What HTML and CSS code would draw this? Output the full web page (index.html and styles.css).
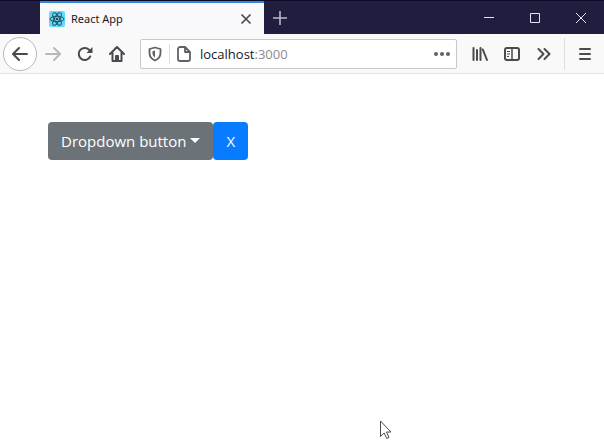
FILE: index.html
```html
<!DOCTYPE html>
<html lang="en">
<head>
<meta charset="utf-8">
<title>React App</title>
<link rel="stylesheet" href="styles.css">
</head>
<body>
<header class="titlebar">
  <div class="tab">
    <svg class="favicon" width="16" height="16" viewBox="0 0 16 16" fill="none" stroke="#24515f">
      <rect width="16" height="16" rx="2" fill="#61dafb" stroke="none"/>
      <ellipse cx="8" cy="8" rx="7" ry="2.7"/>
      <ellipse cx="8" cy="8" rx="7" ry="2.7" transform="rotate(60 8 8)"/>
      <ellipse cx="8" cy="8" rx="7" ry="2.7" transform="rotate(120 8 8)"/>
      <circle cx="8" cy="8" r="1.3" fill="#24515f" stroke="none"/>
    </svg>
    <span class="tab-title">React App</span>
    <button class="tab-close" aria-label="Close tab">
      <svg width="12" height="12" viewBox="0 0 12 12" fill="none" stroke="#4a4a4f" stroke-width="1.7"><path d="M1.5 1.5l9 9M10.5 1.5l-9 9"/></svg>
    </button>
  </div>
  <button class="new-tab" aria-label="New tab">
    <svg width="16" height="16" viewBox="0 0 16 16" fill="none" stroke="#b9b8cc" stroke-width="1.6"><path d="M8 1v14M1 8h14"/></svg>
  </button>
  <div class="window-controls">
    <button aria-label="Minimize"><svg width="12" height="12" viewBox="0 0 12 12" fill="none" stroke="#e4e3f2"><path d="M1 5.5h10"/></svg></button>
    <button aria-label="Maximize"><svg width="12" height="12" viewBox="0 0 12 12" fill="none" stroke="#e4e3f2"><path d="M1.5 1.5h9v9h-9z"/></svg></button>
    <button aria-label="Close"><svg width="12" height="12" viewBox="0 0 12 12" fill="none" stroke="#e4e3f2"><path d="M1 1l10 10M11 1L1 11"/></svg></button>
  </div>
</header>
<nav class="toolbar">
  <button class="tool back" aria-label="Back">
    <svg width="16" height="16" viewBox="0 0 16 16" fill="none" stroke="#4a4a4f" stroke-width="2" stroke-linecap="round" stroke-linejoin="round"><path d="M15 8H1.500M7 2L1 8l6 6"/></svg>
  </button>
  <button class="tool" aria-label="Forward">
    <svg width="16" height="16" viewBox="0 0 16 16" fill="none" stroke="#b8b8ba" stroke-width="2" stroke-linecap="round" stroke-linejoin="round"><path d="M1 8h13.500M9 2l6 6-6 6"/></svg>
  </button>
  <button class="tool" aria-label="Reload">
    <svg width="16" height="16" viewBox="0 0 16 16" fill="none" stroke="#4a4a4f" stroke-width="2" stroke-linecap="round"><path d="M13.200 10.500A6 6 0 1 1 12 3.700l1.500 1.500"/><path d="M15.500 1v6H9.500z" fill="#4a4a4f" stroke="none"/></svg>
  </button>
  <button class="tool" aria-label="Home">
    <svg width="16" height="16" viewBox="0 0 16 16" fill="none" stroke="#4a4a4f" stroke-width="2" stroke-linecap="round" stroke-linejoin="round"><path d="M1 8l7-7 7 7M3.500 7v8h9V7"/><path d="M6.500 14V9.500h3V14z" fill="#4a4a4f" stroke-width="1"/></svg>
  </button>
  <div class="urlbar">
    <svg class="shield" width="16" height="16" viewBox="0 0 16 16" fill="none" stroke="#606065" stroke-width="1.8" stroke-linejoin="round"><path d="M8 1.500L13.500 3v4c0 3.500-2 6-5.500 7.500C4.500 13 2.500 10.500 2.500 7V3z"/><path d="M8 4.500v7C6.200 10.300 5.500 9 5.500 7V5.200z" fill="#606065" stroke="none"/></svg>
    <span class="separator"></span>
    <svg class="page-icon" width="16" height="16" viewBox="0 0 16 16" fill="none" stroke="#606065" stroke-width="1.8" stroke-linejoin="round"><path d="M9 1H4a2 2 0 0 0-2 2v10a2 2 0 0 0 2 2h8a2 2 0 0 0 2-2V6zM9 1v5h5"/></svg>
    <span class="address">localhost<span class="port">:3000</span></span>
    <button class="page-actions" aria-label="Page actions">
      <svg width="16" height="16" viewBox="0 0 16 16" fill="#606065"><circle cx="2" cy="8" r="2"/><circle cx="8" cy="8" r="2"/><circle cx="14" cy="8" r="2"/></svg>
    </button>
  </div>
  <button class="tool" aria-label="Library">
    <svg width="16" height="16" viewBox="0 0 16 16" fill="none" stroke="#4a4a4f" stroke-width="2" stroke-linecap="round"><path d="M1.500 2v12M5 4v10M8.500 2v12M10.800 3.500L15 14"/></svg>
  </button>
  <button class="tool" aria-label="Sidebars">
    <svg width="16" height="16" viewBox="0 0 16 16" fill="none" stroke="#4a4a4f" stroke-width="2"><rect x="1" y="2" width="14" height="12" rx="2"/><path d="M8 2v12" stroke-width="1.5"/><path d="M3 5.500h3M3 8h3M3 10.500h2" stroke-width="1"/></svg>
  </button>
  <button class="tool" aria-label="More tools">
    <svg width="16" height="16" viewBox="0 0 16 16" fill="none" stroke="#4a4a4f" stroke-width="2" stroke-linecap="round" stroke-linejoin="round"><path d="M2.500 3l5 5-5 5M8.500 3l5 5-5 5"/></svg>
  </button>
  <span class="menu-divider"></span>
  <button class="tool" aria-label="Open menu">
    <svg width="16" height="16" viewBox="0 0 16 16" fill="none" stroke="#4a4a4f" stroke-width="2" stroke-linecap="round"><path d="M3 3h10M3 8h10M3 13h10"/></svg>
  </button>
</nav>
<main class="page">
  <div class="button-group">
    <button class="btn btn-secondary">Dropdown button<span class="caret"></span></button>
    <button class="btn btn-primary">X</button>
  </div>
</main>
<svg class="cursor" width="14" height="20" viewBox="0 0 14 20" fill="#fff" stroke="#4a4a4a" stroke-linejoin="round"><path d="M1.500 1v15.500l3.700-3.500 2.500 5.500 2.300-1-2.500-5.500H12z"/></svg>
</body>
</html>
```
FILE: styles.css
```css
* { box-sizing: border-box; }

body {
  margin: 0;
  min-height: 100vh;
  background: #fff;
  font-family: "Open Sans", "Noto Sans", sans-serif;
}

button {
  padding: 0;
  border: 0;
  background: none;
  font-family: inherit;
}

svg { display: block; flex: none; }

.titlebar {
  display: flex;
  height: 34px;
  padding-left: 40px;
  background: #211d3f;
  border-top: 1px solid #0c0a28;
}

.tab {
  display: flex;
  align-items: center;
  flex: 0 1 224px;
  padding: 0 12px 0 9px;
  background: #f9f9fb;
  border-top: 2px solid #3584dc;
}

.tab-title {
  flex: 1;
  margin-left: 6px;
  color: #18181c;
  font-family: "Noto Sans", sans-serif;
  font-size: 11px;
}

.new-tab {
  display: grid;
  place-items: center;
  width: 32px;
}

.window-controls {
  display: flex;
  margin-left: auto;
}

.window-controls button {
  display: grid;
  place-items: center;
  width: 46px;
}

.toolbar {
  display: flex;
  align-items: center;
  height: 40px;
  padding: 0 3px;
  background: #f9f9fa;
  border-bottom: 1px solid #e2e2e4;
}

.tool {
  display: grid;
  place-items: center;
  flex: none;
  width: 32px;
  height: 32px;
}

.back {
  width: 34px;
  height: 34px;
  border: 1px solid #b8b8ba;
  border-radius: 50%;
  background: #fff;
}

.urlbar {
  display: flex;
  align-items: center;
  flex: 1;
  height: 30px;
  margin: 0 7px;
  padding: 0 6px;
  background: #fff;
  border: 1px solid #c8c8ca;
  border-radius: 2px;
}

.separator {
  width: 1px;
  height: 20px;
  margin: 0 6px;
  background: #dededf;
}

.address {
  flex: 1;
  margin-left: 8px;
  color: #18181c;
  font-size: 13px;
}

.port { color: #8b8b90; }

.menu-divider {
  width: 1px;
  height: 32px;
  margin: 0 4px;
  background: #dededf;
}

.page { padding: 48px; }

.button-group { display: flex; }

.btn {
  display: flex;
  align-items: center;
  height: 38px;
  padding: 0 13px;
  border-radius: 4px;
  color: #fff;
  font-size: 15px;
}

.btn-secondary { background: #6c7378; }

.btn-primary { background: #087cff; }

.caret {
  margin: 0 0 2px 4px;
  border-top: 5px solid #fff;
  border-right: 5px solid transparent;
  border-left: 5px solid transparent;
}

.cursor {
  position: absolute;
  top: 420px;
  left: 379px;
}
```
